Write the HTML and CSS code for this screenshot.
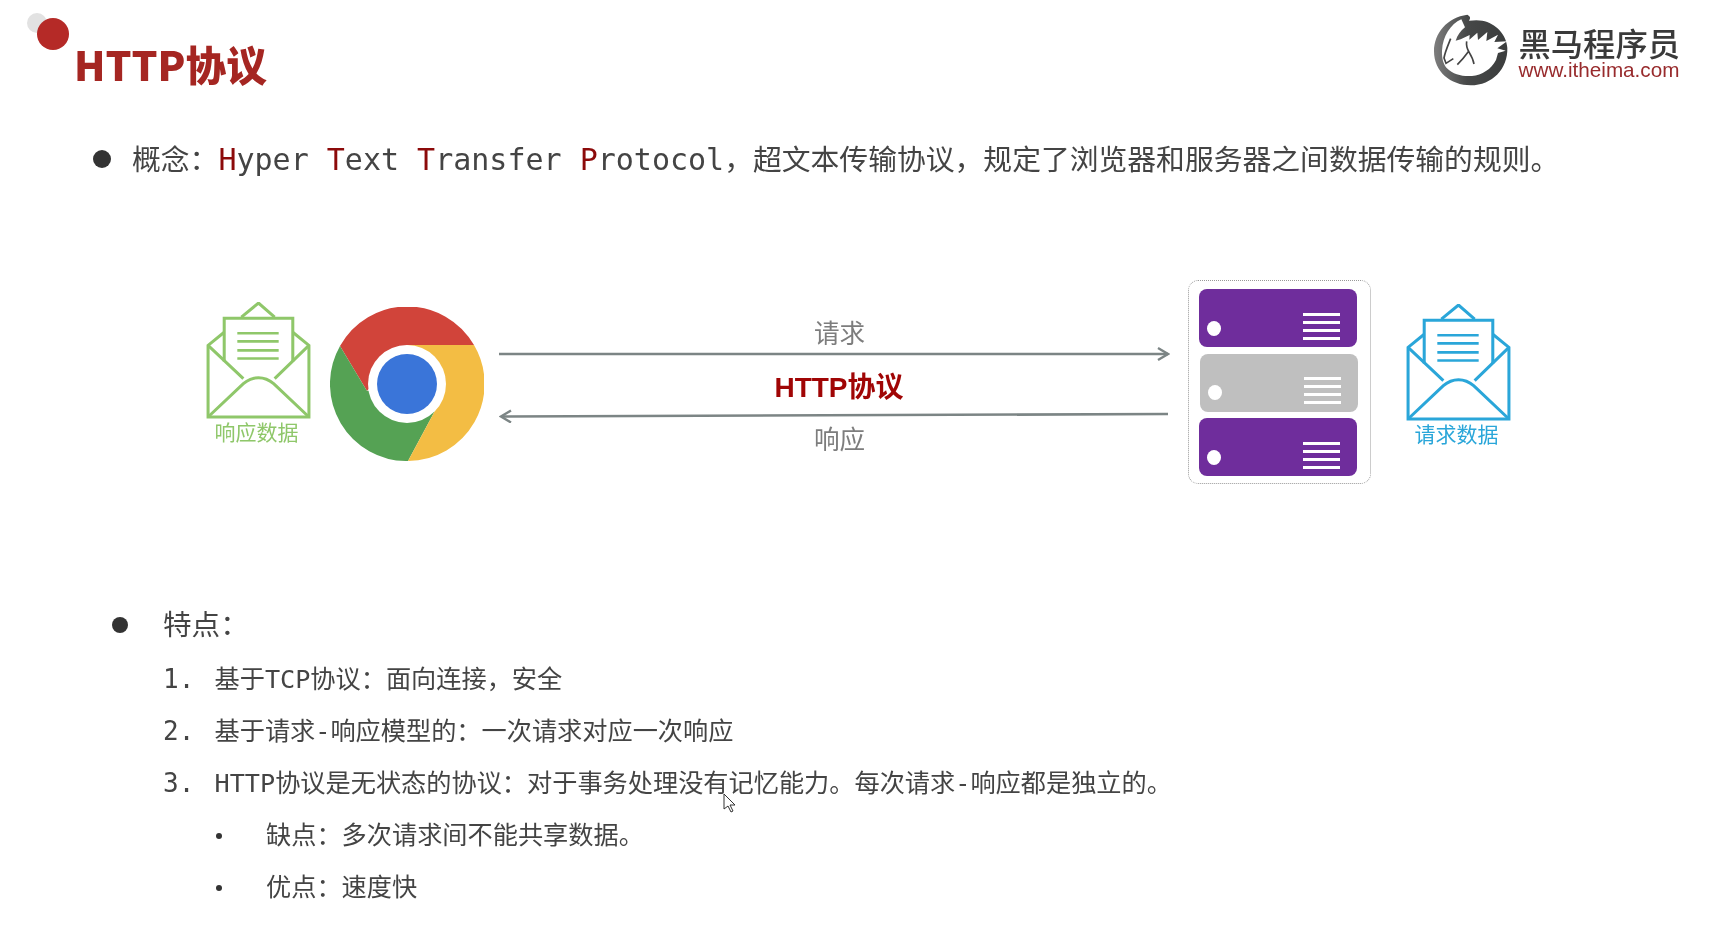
FILE: index.html
```html
<!DOCTYPE html>
<html lang="zh-CN">
<head>
<meta charset="utf-8">
<title>HTTP协议</title>
<link rel="stylesheet" href="styles.css">
</head>
<body>
<div class="slide">
  <header class="header">
    <h1 class="title"><span class="dot-gray"></span><span class="dot-red"></span>HTTP协议</h1>
    <div class="logo">
      <svg class="logo-mark" viewBox="0 0 285 255" width="95" height="85">
        <defs>
          <linearGradient id="ring" x1="0" y1="0" x2="1" y2="0">
            <stop offset="0" stop-color="#7d7d7d"/>
            <stop offset="0.45" stop-color="#464848"/>
            <stop offset="1" stop-color="#3b3d3d"/>
          </linearGradient>
        </defs>
        <path d="M130 20C70 28 30 75 30 130c0 62 50 102 110 102 65 0 112-50 110-112-2-40-35-75-75-82-10-2-25-2-40 0 5-8 5-12-5-18z" fill="url(#ring)"/>
        <path d="M112 34C80 48 56 85 54 128c-1 22 4 40 14 52 20 20 48 26 76 24 30-3 58-20 72-48l6-21 23-7-25-7 29-21-38 2 11-22-35 19 3-27-28 24-2-22-24 21 1-14-27 13-15 4c5-16 15-30 28-40z" fill="#fff"/>
        <path d="M80 92C72 112 63 132 60 150l6 16 22-14" fill="none" stroke="#444" stroke-width="5"/>
        <path d="M128 100c-2 12 2 24 8 34 6 10 12 22 14 34M134 130c-10 14-22 28-34 40" fill="none" stroke="#444" stroke-width="5"/>
      </svg>
      <div class="logo-text">
        <div class="logo-cn">黑马程序员</div>
        <div class="logo-url">www.itheima.com</div>
      </div>
    </div>
  </header>

  <p class="concept"><span class="bullet bullet-low"></span><span>概念：<span class="mono"><b>H</b>yper <b>T</b>ext <b>T</b>ransfer <b>P</b>rotocol</span>，超文本传输协议，规定了浏览器和服务器之间数据传输的规则。</span></p>

  <section class="diagram">
    <figure class="env env-green">
      <svg viewBox="0 0 104 116" width="105" height="117" fill="none" stroke="currentColor" stroke-width="3">
        <path d="M35 15 52 1l16 14"/>
        <path d="M18 59V16h68v43"/>
        <path d="M31 31h41M31 39h41M31 48h41M31 56h41" stroke-width="2.6"/>
        <path d="M18 30 2 43v71h100V43L86 30"/>
        <path d="M2 43 37 76M102 43 68 76"/>
        <path d="M2 114 37 81c9-8 21-8 30 0l35 33"/>
      </svg>
      <figcaption>响应数据</figcaption>
    </figure>
    <svg class="chrome" viewBox="0 0 154 154" width="154" height="154">
      <path d="M10 39A77 77 0 0 1 144 38H77L37 84Z" fill="#d1443a"/>
      <path d="M10 39A77 77 0 0 0 78 154L107 100 77 77 37 84Z" fill="#55a254"/>
      <path d="M144 38A77 77 0 0 1 78 154L107 100 77 77V38Z" fill="#f3bd44"/>
      <circle cx="77" cy="77" r="39" fill="#fff"/>
      <circle cx="77" cy="77" r="30" fill="#3a75d9"/>
    </svg>
    <div class="channel">
      <div class="channel-label">请求</div>
      <svg class="arrow-top" viewBox="0 0 671 16" width="671" height="16" fill="none" stroke="#7c8585">
        <path d="M0 8H669" stroke-width="2.6"/>
        <path d="M659 2l10 6-10 6" stroke-width="2.4"/>
      </svg>
      <div class="channel-name">HTTP协议</div>
      <svg class="arrow-bottom" viewBox="0 0 671 16" width="671" height="16" fill="none" stroke="#7c8585">
        <path d="M2 9.5 669 7" stroke-width="2.6"/>
        <path d="M12 3.5 2 9.5l10 6" stroke-width="2.4"/>
      </svg>
      <div class="channel-label channel-label-low">响应</div>
    </div>
    <div class="server">
      <div class="bar bar-purple"><span class="led"></span><span class="lines"><i></i><i></i><i></i><i></i></span></div>
      <div class="bar bar-gray"><span class="led"></span><span class="lines"><i></i><i></i><i></i><i></i></span></div>
      <div class="bar bar-purple"><span class="led"></span><span class="lines"><i></i><i></i><i></i><i></i></span></div>
    </div>
    <figure class="env env-blue">
      <svg viewBox="0 0 104 116" width="105" height="117" fill="none" stroke="currentColor" stroke-width="3">
        <path d="M35 15 52 1l16 14"/>
        <path d="M18 59V16h68v43"/>
        <path d="M31 31h41M31 39h41M31 48h41M31 56h41" stroke-width="2.6"/>
        <path d="M18 30 2 43v71h100V43L86 30"/>
        <path d="M2 43 37 76M102 43 68 76"/>
        <path d="M2 114 37 81c9-8 21-8 30 0l35 33"/>
      </svg>
      <figcaption>请求数据</figcaption>
    </figure>
  </section>

  <section class="features">
    <div class="features-head"><span class="bullet bullet-small"></span>特点：</div>
    <ol class="steps">
      <li class="step"><span class="num">1.</span>基于TCP协议：面向连接，安全</li>
      <li class="step"><span class="num">2.</span>基于请求-响应模型的：一次请求对应一次响应</li>
      <li class="step"><span class="num">3.</span>HTTP协议是无状态的协议：对于事务处理没有记忆能力。每次请求-响应都是独立的。</li>
    </ol>
    <ul class="subs">
      <li class="sub"><span class="tick"></span>缺点：多次请求间不能共享数据。</li>
      <li class="sub"><span class="tick"></span>优点：速度快</li>
    </ul>
  </section>

  <svg class="cursor" viewBox="0 0 13 20" width="13" height="20">
    <path d="M1 1v15l4-3 3 6 2-1-3-6h5Z" fill="#fff" stroke="#333" stroke-width="1"/>
  </svg>
</div>
</body>
</html>
```
FILE: styles.css
```css
* { box-sizing: border-box; }
html, body { margin: 0; padding: 0; background: #fff; }
.slide {
  position: relative;
  width: 1725px;
  height: 943px;
  padding-top: 15px;
  overflow: hidden;
  background: #fff;
  color: #444;
  font-family: "DejaVu Sans Mono", "Noto Sans CJK SC", monospace;
  filter: blur(0.4px);
}
.header {
  display: flex;
  justify-content: space-between;
  height: 70px;
  padding: 0 45px 0 74px;
}
.title {
  position: relative;
  margin: 24px 0 0;
  font-family: "Noto Sans CJK SC", sans-serif;
  font-size: 40.7px;
  line-height: 50px;
  font-weight: 900;
  color: #a52622;
}
.title span { position: absolute; border-radius: 50%; }
.dot-gray { left: -47px; top: -26px; width: 20px; height: 20px; background: #e2e2e2; }
.dot-red { left: -37px; top: -21px; width: 32px; height: 32px; background: #b52a27; }
.logo { display: flex; margin-top: -7px; }
.logo-mark { display: block; }
.logo-text { padding-top: 16px; }
.logo-cn {
  font-family: "Noto Sans CJK SC", sans-serif;
  font-size: 32.3px;
  line-height: 36px;
  font-weight: 500;
  color: #3a3a3a;
}
.logo-url {
  font-family: "Liberation Sans", sans-serif;
  font-size: 20.7px;
  line-height: 20px;
  color: #982b2d;
}
.concept {
  display: flex;
  align-items: center;
  gap: 21px;
  margin: 52px 0 0;
  padding-left: 93px;
  height: 40px;
  font-family: "Noto Sans CJK SC", sans-serif;
  font-size: 28.8px;
  white-space: nowrap;
}
.mono { font-family: "DejaVu Sans Mono", monospace; font-size: 30px; }
.mono b { font-weight: 400; color: #8c0a0a; }
.bullet {
  flex: none;
  width: 18px;
  height: 18px;
  border-radius: 50%;
  background: #333;
}
.bullet-low { margin-top: 4px; }
.diagram {
  display: flex;
  align-items: flex-start;
  margin-top: 103px;
  padding-left: 206px;
  height: 204px;
}
.env { margin: 22px 0 0; width: 105px; text-align: center; }
.env svg { display: block; }
.env figcaption {
  margin-top: -2px;
  padding-right: 4px;
  font-family: "Noto Sans CJK SC", sans-serif;
  font-size: 21px;
  line-height: 28px;
}
.env-green { color: #8fc76a; }
.env-blue { color: #2aa6d9; margin-left: 35px; margin-top: 24px; }
.chrome { flex: none; display: block; margin: 27px 0 0 19px; }
.channel {
  flex: none;
  width: 671px;
  margin: 39px 0 0 15px;
  text-align: center;
  font-family: "Noto Sans CJK SC", sans-serif;
}
.channel svg { display: block; }
.channel-label { padding-left: 10px; font-size: 25.6px; line-height: 26px; color: #7d7d7d; }
.channel-name {
  margin-top: 11px;
  padding-left: 9px;
  font-family: "Liberation Sans", "Noto Sans CJK SC", sans-serif;
  font-size: 28px;
  line-height: 30px;
  font-weight: 700;
  color: #a00505;
}
.arrow-top { margin-top: 1px; }
.arrow-bottom { margin-top: 4px; }
.channel-label-low { margin-top: 2px; }
.server {
  flex: none;
  display: flex;
  flex-direction: column;
  gap: 6.5px;
  width: 183px;
  height: 204px;
  margin-left: 18px;
  padding: 8px 0 0 10px;
  border: 1px dotted #999;
  border-radius: 10px;
}
.bar {
  display: flex;
  justify-content: space-between;
  align-items: center;
  width: 158px;
  height: 58px;
  padding: 16px 17px 0 8px;
  border-radius: 8px;
}
.bar-purple { background: #6f2d9c; }
.bar-gray { background: #bfbfbf; margin-left: 1px; }
.led { width: 14px; height: 15px; margin-top: 4px; border-radius: 50%; background: #fff; }
.lines { display: flex; flex-direction: column; gap: 5px; width: 37px; }
.lines i { display: block; height: 3px; background: #fff; }
.features { margin-top: 112px; }
.features-head {
  display: flex;
  align-items: center;
  gap: 35px;
  height: 52px;
  padding-left: 112px;
  margin-bottom: 5px;
  font-family: "Noto Sans CJK SC", sans-serif;
  font-size: 28.6px;
}
.bullet-small { width: 16px; height: 16px; margin-top: 6px; }
.steps, .subs { list-style: none; margin: 0; padding: 0; }
.step, .sub {
  display: flex;
  height: 52px;
  line-height: 52px;
  font-size: 25.2px;
  white-space: nowrap;
}
.step { padding-left: 163px; align-items: baseline; }
.num { width: 51.5px; flex: none; font-size: 26px; }
.sub { padding-left: 216px; align-items: center; }
.sub:first-child { margin-top: 1px; }
.tick {
  flex: none;
  width: 6px;
  height: 6px;
  margin-right: 44px;
  border-radius: 50%;
  background: #333;
}
.cursor { position: absolute; left: 723px; top: 793px; }
```
